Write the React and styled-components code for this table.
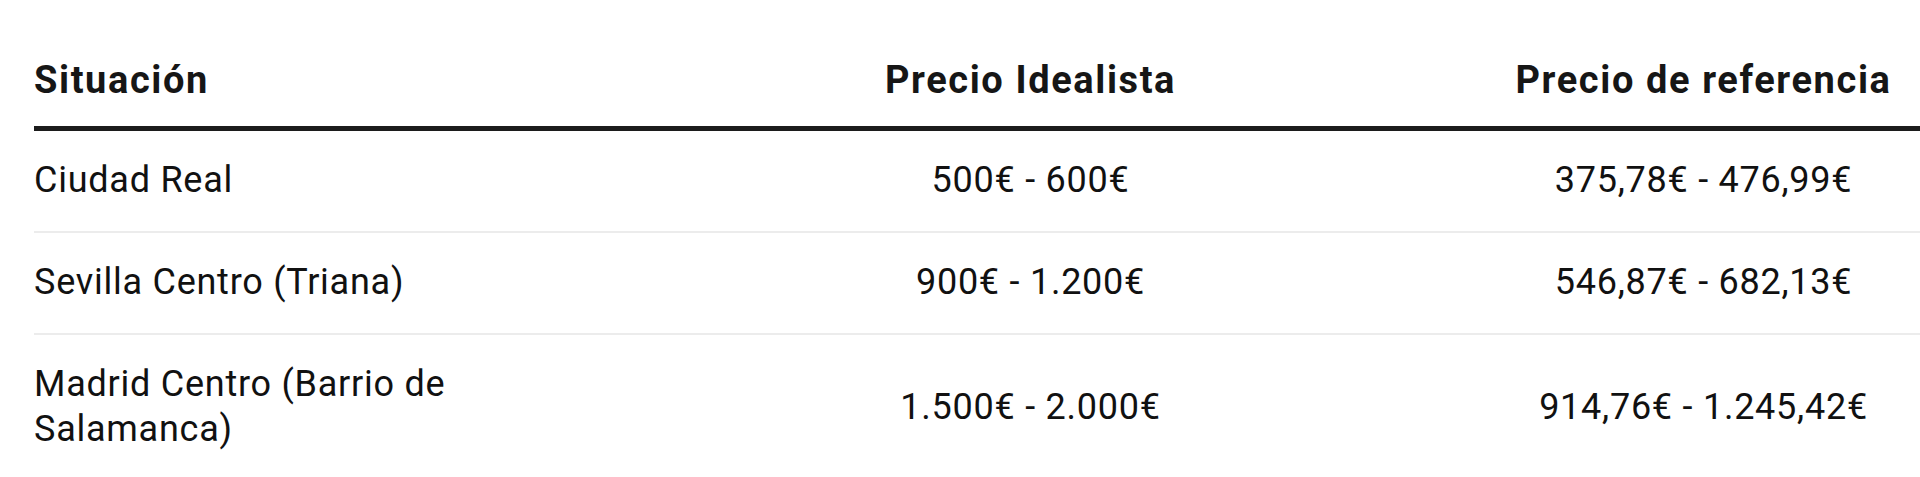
import styled, { createGlobalStyle } from "styled-components"

const GlobalStyle = createGlobalStyle`
    html, body {
        margin: 0;
        padding: 0;
        background: #fff;
        overflow: hidden;
    }
    body {
        font-family: Roboto, "Liberation Sans", sans-serif;
    }
`;
const Page = styled.div`
    padding: 30px 0 0 34px;
    width: 1886px;
    height: 447px;
    overflow: hidden;
`;
const Table = styled.table`
    border-collapse: separate;
    border-spacing: 0;
    table-layout: fixed;
    width: 2006px;
`;
const Col = styled.col`
    width: ${(p) => p.$width}px;
`;
const HeadCell = styled.th`
    padding: 28px ${(p) => (p.$first ? "200px" : "0")} 22px 0;
    border-bottom: 5px solid #1c1c1c;
    font-size: 38px;
    line-height: 1.2;
    font-weight: 700;
    letter-spacing: 1.6px;
    color: #161616;
    text-align: ${(p) => (p.$first ? "left" : "center")};
`;
const Row = styled.tr`
    & > td {
        border-bottom: 2px solid #ececec;
    }
`;
const Cell = styled.td`
    padding: 27.5px ${(p) => (p.$first ? "200px" : "0")} 27.5px 0;
    font-size: 36px;
    line-height: 1.25;
    font-weight: 400;
    letter-spacing: 0.75px;
    color: #111;
    text-align: ${(p) => (p.$first ? "left" : "center")};
    vertical-align: middle;
`;

const rows = [
    { place: "Ciudad Real", idealista: "500€ - 600€", reference: "375,78€ - 476,99€" },
    { place: "Sevilla Centro (Triana)", idealista: "900€ - 1.200€", reference: "546,87€ - 682,13€" },
    { place: "Madrid Centro (Barrio de Salamanca)", idealista: "1.500€ - 2.000€", reference: "914,76€ - 1.245,42€" },
];

const App = () => {
    return (
        <Page>
            <GlobalStyle />
            <Table>
                <colgroup>
                    <Col $width={660} />
                    <Col $width={673} />
                    <Col $width={673} />
                </colgroup>
                <thead>
                    <tr>
                        <HeadCell $first>Situación</HeadCell>
                        <HeadCell>Precio Idealista</HeadCell>
                        <HeadCell>Precio de referencia</HeadCell>
                    </tr>
                </thead>
                <tbody>
                    {rows.map((r) => (
                        <Row key={r.place}>
                            <Cell $first>{r.place}</Cell>
                            <Cell>{r.idealista}</Cell>
                            <Cell>{r.reference}</Cell>
                        </Row>
                    ))}
                </tbody>
            </Table>
        </Page>
    )
}
export default App
